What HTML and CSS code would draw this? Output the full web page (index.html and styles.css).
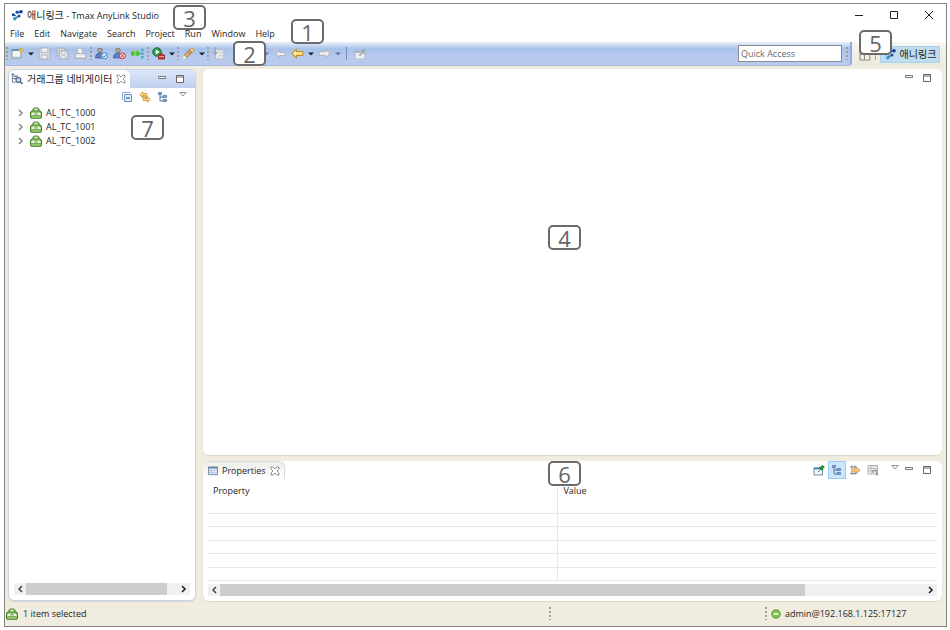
FILE: index.html
```html
<!DOCTYPE html>
<html lang="ko">
<head>
  <meta charset="UTF-8" />
  <meta name="viewport" content="width=device-width, initial-scale=1.0" />
  <title>애니링크 - Tmax AnyLink Studio</title>
  <link rel="stylesheet" href="styles.css">
</head>
<body>

  <!-- shared icons -->
  <svg class="sprite" aria-hidden="true">
    <symbol id="logo" viewBox="0 0 12 12">
      <path d="M6 3.500H10M2.500 5.500L5 7M4 9.500L7.500 7" fill="none" stroke="#2460a8" stroke-width="1.200"/>
      <circle cx="2.300" cy="5.800" r="1.500" fill="#16458c"/><circle cx="3.800" cy="9.800" r="1.800" fill="#2e9ad0"/>
      <circle cx="6.200" cy="3.300" r="1.700" fill="#1c55b0"/><circle cx="10" cy="2.800" r="1.800" fill="#123f93"/>
      <circle cx="8" cy="7" r="1.500" fill="#1c4f9c"/>
    </symbol>
    <symbol id="caret" viewBox="0 0 6 4"><path d="M0 0.5h6L3 3.5z" fill="currentColor"/></symbol>
    <symbol id="case" viewBox="0 0 12 12">
      <path d="M3 4V2.500L4.500 1H7.500L9 2.500V4" fill="#d7e9c3" stroke="#4b8a2b" stroke-width="1.200"/>
      <path d="M2 4H10L11.400 5.500V10L10.500 11.300H1.500L.6 10V5.500z" fill="#a5d07d" stroke="#3f7d22" stroke-width="1.100"/>
      <path d="M1.500 6.200h9v1.800h-9z" fill="#f3faea"/><path d="M1.500 8.700h9" stroke="#5c983b" stroke-width=".8"/>
      <path d="M5 6h2v2.200H5z" fill="#fff" stroke="#4b8a2b" stroke-width=".6"/>
    </symbol>
    <symbol id="close" viewBox="0 0 10 10">
      <path d="M1 1h2l2 2 2-2h2v2L7 5l2 2v2H7L5 7 3 9H1V7l2-2-2-2z" fill="#fff" stroke="#777" stroke-width=".8"/>
    </symbol>
    <symbol id="min" viewBox="0 0 8 4"><path d="M.5 .5h7v2h-7z" fill="#fff" stroke="#74777c"/></symbol>
    <symbol id="max" viewBox="0 0 8 8"><path d="M.5 .5h7v7h-7z" fill="#fff" stroke="#666"/><path d="M0 2h8" stroke="#666"/></symbol>
    <symbol id="menu" viewBox="0 0 8 5"><path d="M.8 .5h6.4L4 4z" fill="#fff" stroke="#777" stroke-width=".8"/></symbol>
    <symbol id="tree" viewBox="0 0 12 12">
      <path d="M3 3v7h3M3 6h3" fill="none" stroke="#56779f"/>
      <path d="M1.5 1.5h3v2h-3zM6 4.5h3.5v2H6zM6 8.5h3.5v2H6z" fill="#8aa9d2" stroke="#4f76ac" stroke-width=".8"/>
    </symbol>
    <symbol id="navi" viewBox="0 0 13 13">
      <path d="M1.500 1v9H5M1.500 6H5" fill="none" stroke="#69798e"/>
      <path d="M.5 1.500h3M3 3.500h4.500M3 6h3" stroke="#6f86a8" stroke-width="1.800"/>
      <circle cx="8" cy="7.500" r="2.600" fill="#c9ddf2" stroke="#46587a" stroke-width="1.200"/><path d="M10 9.500l2.500 2.500" stroke="#555d70" stroke-width="1.600"/>
    </symbol>
    <symbol id="new" viewBox="0 0 13 12">
      <path d="M1 2.500h9v8H1z" fill="#eff8fb" stroke="#a3935a"/><path d="M1 2.500h8" stroke="#4c8dba" stroke-width="1.6"/>
      <path d="M2 9.500h6" stroke="#a6d5e4"/><path d="M10 .5v5M7.500 3h5" stroke="#e2ad26" stroke-width="1.600"/><path d="M9.500 2.500h1v1h-1z" fill="#fff6bb"/>
    </symbol>
    <symbol id="save" viewBox="0 0 12 12">
      <path d="M1 1h10v10H1z" fill="#d5dae4" stroke="#b0b4bd"/><path d="M3 1h6v4H3zM3.5 7.5h5V11h-5z" fill="#eef0f4" stroke="#b0b4bd" stroke-width=".8"/>
    </symbol>
    <symbol id="saveall" viewBox="0 0 12 12">
      <path d="M1 1h7v7H1z" fill="#d5dae4" stroke="#b0b4bd"/><path d="M3 3.5h8V11H4.500L3 9.500z" fill="#e4e8ef" stroke="#a8adb8"/>
      <path d="M5 4h4v2.500H5zM5.500 8h3v3h-3z" fill="#f5f6f8" stroke="#adb2bc" stroke-width=".7"/>
    </symbol>
    <symbol id="print" viewBox="0 0 12 12">
      <path d="M3 1h4l1.500 5h-5z" fill="#f2f3f6" stroke="#b4b8c0"/><path d="M1 6h10v4.500H1z" fill="#e3e5ea" stroke="#acb0b9"/><path d="M2 8.500h8" stroke="#f4f5f8"/>
    </symbol>
    <symbol id="user" viewBox="0 0 13 12">
      <circle cx="5" cy="2.800" r="2.200" fill="#c2ab90" stroke="#6d6468" stroke-width=".8"/>
      <path d="M.5 10.500Q.5 5.500 5 5.500T9 10.500z" fill="#5b7fc0" stroke="#46609a" stroke-width=".8"/>
    </symbol>
    <symbol id="link" viewBox="0 0 14 12">
      <path d="M0 3.500h4v5H0zM5 3.500h4v5H5z" fill="#49bf3c" stroke="#7bdc52" stroke-width=".6"/>
      <path d="M9 6h2" fill="none" stroke="#4383a7"/><path d="M11 .8h2.500v2.500H11zM11 4.800h2.500v2.500H11zM11 8.800h2.500v2.500H11z" fill="#41a6c8"/>
    </symbol>
    <symbol id="run" viewBox="0 0 13 13">
      <circle cx="5" cy="5" r="4.300" fill="#2f9b45" stroke="#20773a"/><path d="M3.700 2.500L7.700 5l-4 2.500z" fill="#fff"/>
      <path d="M8 8V7h3v1" fill="none" stroke="#942428"/><path d="M6.500 8h6v4h-6z" fill="#cc4141" stroke="#962b2d"/><path d="M7 9.500h5" stroke="#eca09b"/>
    </symbol>
    <symbol id="torch" viewBox="0 0 13 13">
      <path d="M7.500 2.500L10 .8l2.200 2.400-2 2.500z" fill="#f6d473" stroke="#b9935a"/><path d="M7 3L2 8.500l2.500 2.300L10 5.500z" fill="#e6a967" stroke="#9e7650" stroke-width=".8"/>
      <path d="M6 4.500l2.500 2.200" stroke="#7b716c"/><path d="M2 8.500l2.500 2.300L1 12z" fill="#fffbd9"/>
    </symbol>
    <symbol id="import" viewBox="0 0 12 12">
      <path d="M3 2.500h8V11H3z" fill="#e7e9ed" stroke="#b6bac2"/><path d="M3 0v6.500M1 4.500l2 2.500 2-2.500" fill="none" stroke="#a3a7b0" stroke-width="1.300"/><path d="M6 5h4M6 8h4" stroke="#c3c8d1"/>
    </symbol>
    <symbol id="back" viewBox="0 0 12 10"><path d="M.7 5L5 1v2.300h6v3.400H5V9z"/></symbol>
    <symbol id="forward" viewBox="0 0 12 10"><path d="M11.300 5L7 1v2.300H1v3.400h6V9z"/></symbol>
    <symbol id="backedit" viewBox="0 0 13 11">
      <path d="M3 5.500L6.500 2.500v2H12v3H6.500v2z" fill="#eceef1" stroke="#b4b8bf"/><path d="M2.500.5v4M.5 2.500h4M1 1l3 3M4 1L1 4" stroke="#c5c8c9" stroke-width=".7"/>
    </symbol>
    <symbol id="pin-gray" viewBox="0 0 12 12">
      <path d="M1 4.500h9V11H1z" fill="#edf0f2" stroke="#b9bec6"/><path d="M1 4.500h5" stroke="#a5b0b6" stroke-width="1.500"/><path d="M5 8l3-3M7 3l3 3M8 4l2-2" stroke="#98a99d" stroke-width="1.500"/>
    </symbol>
    <symbol id="pin" viewBox="0 0 12 12">
      <path d="M1 4h8.500v7H1z" fill="#edf7fa" stroke="#6a93a9"/><path d="M1 4.500h6" stroke="#3c7eac" stroke-width="1.600"/>
      <path d="M5 8l3-3" stroke="#5b7965"/><path d="M6.500 3L10 6.200M8 4.500l2-2M8.500 1.500l2.700 2.300" stroke="#288633" stroke-width="1.800"/>
    </symbol>
    <symbol id="collapse" viewBox="0 0 12 12">
      <path d="M1.500 9V1.500h8" fill="none" stroke="#8cabd2"/><path d="M3.500 3.500h7v7h-7z" fill="#dff0fa" stroke="#6a90bd"/><path d="M5 7h4" stroke="#285c94" stroke-width="1.200"/>
    </symbol>
    <symbol id="sync" viewBox="0 0 13 13">
      <path d="M.8 4L4 .8v2h4.500v5H6.500V5H4v2z" fill="#fbdf91" stroke="#c48b28" stroke-width=".9"/>
      <path d="M12.200 9L9 12.200v-2H4.500v-5H6.500V8H9V6z" fill="#fbdf91" stroke="#c48b28" stroke-width=".9"/>
    </symbol>
    <symbol id="filter" viewBox="0 0 14 13">
      <path d="M1 3h8M1 10.500h8M3.500 1v4M7 1v4M3.500 8.500V12M7 8.500V12" stroke="#6f7481" stroke-width="1"/>
      <path d="M3 5.500h6v-2L13 6.700 9 10V8H3z" fill="#ffd889" stroke="#c98a28" stroke-width=".9"/>
    </symbol>
    <symbol id="restore" viewBox="0 0 12 12">
      <path d="M1 1.500h9.500v8.500H1z" fill="#f4f4f4" stroke="#b4b4b4"/><path d="M1 2h9.500M1 4.500h9M1 7h6M4 2v8" stroke="#b8b8b8"/>
      <path d="M6 9V6.500h3.500V10l1.500 1.500" fill="none" stroke="#9c9c9c" stroke-width="1.400"/>
    </symbol>
    <symbol id="table" viewBox="0 0 11 10">
      <path d="M.5 .5h10v8.500H.5z" fill="#e4edf9" stroke="#71839f"/><path d="M.5 1.500h10" stroke="#5d7aa8" stroke-width="1.500"/><path d="M3.500 2v7M1 4.500h9.500M1 6.800h9.500" stroke="#a7b9d5" stroke-width=".8"/>
    </symbol>
    <symbol id="persp" viewBox="0 0 12 12">
      <path d="M1 3h9v8H1zM1 6h9M5 3v8" fill="#f7f5e9" stroke="#8d8b7c"/><path d="M9 0v5M6.500 2.500h5" stroke="#d6a42c"/>
    </symbol>
    <symbol id="chev-left" viewBox="0 0 6 8"><path d="M5 1L2 4l3 3" fill="none" stroke="#444" stroke-width="1.500"/></symbol>
    <symbol id="chev-right" viewBox="0 0 6 8"><path d="M1 1l3 3-3 3" fill="none" stroke="currentColor" stroke-width="1.500"/></symbol>
  </svg>

  <div class="window">
    <header class="titlebar">
      <svg class="icon"><use href="#logo"/></svg>
      <h1><span class="ko">애니링크</span> - Tmax AnyLink Studio</h1>
      <div class="window-buttons">
        <button aria-label="Minimize"><svg viewBox="0 0 10 10"><path d="M1 5.500h8"/></svg></button>
        <button aria-label="Maximize"><svg viewBox="0 0 10 10"><path d="M1.500 1.500h7v7h-7z"/></svg></button>
        <button aria-label="Close"><svg viewBox="0 0 10 10"><path d="M1 1l8 8M9 1L1 9"/></svg></button>
      </div>
    </header>

    <nav class="menubar">
      <button>File</button>
      <button>Edit</button>
      <button>Navigate</button>
      <button>Search</button>
      <button>Project</button>
      <button>Run</button>
      <button>Window</button>
      <button>Help</button>
    </nav>

    <div class="toolbar">
      <div class="tools">
        <i class="grip"></i>
        <button class="tool" aria-label="New"><svg><use href="#new"/></svg></button>
        <button class="drop" aria-label="New menu"><svg><use href="#caret"/></svg></button>
        <button class="tool" aria-label="Save"><svg><use href="#save"/></svg></button>
        <button class="tool" aria-label="Save all"><svg><use href="#saveall"/></svg></button>
        <button class="tool" aria-label="Print"><svg><use href="#print"/></svg></button>
        <i class="grip"></i>
        <button class="tool" aria-label="Log in">
          <svg viewBox="0 0 13 12"><use href="#user" width="13" height="12"/><circle cx="9.500" cy="8.300" r="3" fill="#dceffc" stroke="#3f89cf"/><path d="M8 8.300l1.200 1.200 2-2.500" fill="none" stroke="#2974bd"/></svg>
        </button>
        <button class="tool" aria-label="Log out">
          <svg viewBox="0 0 13 12"><use href="#user" width="13" height="12"/><circle cx="9.500" cy="8.300" r="3" fill="#f8dfdc" stroke="#d2332e"/><path d="M8.200 7l2.600 2.600M10.800 7L8.200 9.600" stroke="#cb2929"/></svg>
        </button>
        <button class="tool" aria-label="Deploy"><svg><use href="#link"/></svg></button>
        <i class="grip"></i>
        <button class="tool" aria-label="Run"><svg><use href="#run"/></svg></button>
        <button class="drop" aria-label="Run menu"><svg><use href="#caret"/></svg></button>
        <i class="grip"></i>
        <button class="tool" aria-label="Search"><svg><use href="#torch"/></svg></button>
        <button class="drop" aria-label="Search menu"><svg><use href="#caret"/></svg></button>
        <i class="grip"></i>
        <button class="tool" aria-label="Import"><svg><use href="#import"/></svg></button>
        <span class="marker-slot"><b class="marker marker-2">2</b></span>
        <button class="drop dim" aria-label="Annotation menu"><svg><use href="#caret"/></svg></button>
        <button class="tool" aria-label="Last edit location"><svg><use href="#backedit"/></svg></button>
        <button class="tool back" aria-label="Back"><svg><use href="#back"/></svg></button>
        <button class="drop" aria-label="Back menu"><svg><use href="#caret"/></svg></button>
        <button class="tool forward" aria-label="Forward"><svg><use href="#forward"/></svg></button>
        <button class="drop dim" aria-label="Forward menu"><svg><use href="#caret"/></svg></button>
        <i class="line"></i>
        <button class="tool" aria-label="Pin editor"><svg><use href="#pin-gray"/></svg></button>
        <input class="quick" type="text" placeholder="Quick Access" aria-label="Quick Access">
        <i class="grip"></i>
      </div>
      <div class="perspectives">
        <button class="tool" aria-label="Open perspective"><svg><use href="#persp"/></svg></button>
        <i class="split"></i>
        <button class="persp-active"><svg class="icon"><use href="#logo"/></svg>애니링크</button>
        <b class="marker marker-5">5</b>
      </div>
    </div>

    <main class="workbench">
      <section class="view navigator">
        <div class="tabs">
          <div class="tab">
            <svg class="icon"><use href="#navi"/></svg>
            <h2 class="ko">거래그룹 네비게이터</h2>
            <button aria-label="Close view"><svg class="x"><use href="#close"/></svg></button>
          </div>
          <div class="view-buttons">
            <button aria-label="Minimize view"><svg class="min"><use href="#min"/></svg></button>
            <button aria-label="Maximize view"><svg class="max"><use href="#max"/></svg></button>
          </div>
        </div>
        <div class="view-tools">
          <button aria-label="Collapse all"><svg class="icon"><use href="#collapse"/></svg></button>
          <button aria-label="Link with editor"><svg class="icon"><use href="#sync"/></svg></button>
          <button aria-label="Tree layout"><svg class="icon"><use href="#tree"/></svg></button>
          <button class="view-menu" aria-label="View menu"><svg class="menu"><use href="#menu"/></svg></button>
        </div>
        <ul class="tree">
          <li><button aria-label="Expand"><svg><use href="#chev-right"/></svg></button><svg class="icon"><use href="#case"/></svg>AL_TC_1000</li>
          <li><button aria-label="Expand"><svg><use href="#chev-right"/></svg></button><svg class="icon"><use href="#case"/></svg>AL_TC_1001</li>
          <li><button aria-label="Expand"><svg><use href="#chev-right"/></svg></button><svg class="icon"><use href="#case"/></svg>AL_TC_1002</li>
        </ul>
        <div class="scrollbar">
          <button aria-label="Scroll left"><svg><use href="#chev-left"/></svg></button>
          <div class="track"><div class="thumb"></div></div>
          <button aria-label="Scroll right"><svg><use href="#chev-right"/></svg></button>
        </div>
        <b class="marker marker-7">7</b>
      </section>

      <section class="view editor">
        <div class="view-buttons">
          <button aria-label="Minimize editor"><svg class="min"><use href="#min"/></svg></button>
          <button aria-label="Maximize editor"><svg class="max"><use href="#max"/></svg></button>
        </div>
        <b class="marker marker-4">4</b>
      </section>

      <section class="view properties">
        <div class="tabs">
          <div class="tab">
            <svg class="table-icon"><use href="#table"/></svg>
            <h2>Properties</h2>
            <button aria-label="Close view"><svg class="x"><use href="#close"/></svg></button>
          </div>
          <div class="prop-tools">
            <button aria-label="Pin to selection"><svg class="icon"><use href="#pin"/></svg></button>
            <button class="on" aria-label="Show categories"><svg class="icon"><use href="#tree"/></svg></button>
            <button aria-label="Show advanced properties"><svg class="icon"><use href="#filter"/></svg></button>
            <button aria-label="Restore default value"><svg class="icon"><use href="#restore"/></svg></button>
          </div>
          <button class="view-menu" aria-label="View menu"><svg class="menu"><use href="#menu"/></svg></button>
          <div class="view-buttons">
            <button aria-label="Minimize view"><svg class="min"><use href="#min"/></svg></button>
            <button aria-label="Maximize view"><svg class="max"><use href="#max"/></svg></button>
          </div>
        </div>
        <div class="table-wrap">
          <table>
            <thead>
              <tr><th>Property</th><th>Value</th></tr>
            </thead>
            <tbody>
              <tr><td></td><td></td></tr>
              <tr><td></td><td></td></tr>
              <tr><td></td><td></td></tr>
              <tr><td></td><td></td></tr>
              <tr><td></td><td></td></tr>
              <tr><td></td><td></td></tr>
            </tbody>
          </table>
        </div>
        <div class="scrollbar">
          <button aria-label="Scroll left"><svg><use href="#chev-left"/></svg></button>
          <div class="track"><div class="thumb"></div></div>
          <button aria-label="Scroll right"><svg><use href="#chev-right"/></svg></button>
        </div>
        <b class="marker marker-6">6</b>
      </section>
    </main>

    <footer class="statusbar">
      <div class="status-left"><svg class="icon"><use href="#case"/></svg>1 item selected</div>
      <div class="status-mid"><i class="grip"></i></div>
      <div class="status-right">
        <i class="grip"></i>
        <svg class="dot" viewBox="0 0 10 10"><circle cx="5" cy="5" r="4.200" fill="#7fc94b" stroke="#54962f"/><path d="M2.500 5h5" stroke="#f2ffe4" stroke-width="1.600"/></svg>
        admin@192.168.1.125:17127
      </div>
    </footer>

    <b class="marker marker-3">3</b>
    <b class="marker marker-1">1</b>
  </div>

</body>
</html>
```
FILE: styles.css
```css
* {
  margin: 0;
  padding: 0;
  box-sizing: border-box;
}

body {
  height: 100vh;
  padding: 3px 3px 3px 4px;
  background: #fff;
  color: #1e1e1e;
  font: 9px/14px "Open Sans", "Noto Sans CJK KR", sans-serif;
}

button {
  display: flex;
  align-items: center;
  justify-content: center;
  border: none;
  background: none;
  color: inherit;
  font: inherit;
}

h1,
h2 {
  font-size: 9px;
  font-weight: 400;
  white-space: nowrap;
}

.ko {
  font-size: 10px;
}

.sprite {
  position: absolute;
  width: 0;
  height: 0;
}

.icon {
  width: 12px;
  height: 12px;
  flex: none;
}

.window {
  position: relative;
  display: flex;
  flex-direction: column;
  height: 100%;
  border: 1px solid #85837d;
  background: #f0ece0;
}

/* title and menu */
.titlebar {
  display: flex;
  align-items: center;
  gap: 4px;
  height: 22px;
  padding-left: 6px;
  background: #fff;
}

.window-buttons {
  display: flex;
  margin-left: auto;
}

.window-buttons button {
  width: 35px;
  height: 20px;
}

.window-buttons svg {
  width: 10px;
  height: 10px;
  fill: none;
  stroke: #222;
}

.menubar {
  display: flex;
  height: 16px;
  background: #fff;
}

.menubar button {
  padding: 0 5px;
}

/* toolbar */
.toolbar {
  display: flex;
  height: 24px;
  background: linear-gradient(#f7f6f2, #ece8dc);
}

.tools {
  display: flex;
  flex: 1;
  align-items: center;
  padding: 0 2px 0 0;
  border-right: 2px solid #8eaae0;
  border-bottom: 1px solid #a8b9dd;
  border-radius: 0 0 4px 0;
  background: linear-gradient(#eaf0fa 0, #a5c2ea 30%, #b7c9ee 60%, #b9caef);
}

.grip {
  width: 3px;
  height: 13px;
  flex: none;
  background: repeating-linear-gradient(#a39e91 0 2px, transparent 2px 4px) 1px 0 / 2px 100% no-repeat;
}

.tool {
  width: 18px;
  height: 18px;
  flex: none;
}

.tool svg {
  width: 13px;
  height: 13px;
}

.drop {
  width: 9px;
  height: 18px;
  flex: none;
}

.drop svg {
  width: 6px;
  height: 4px;
}

.dim {
  color: #69748a;
}

.back {
  fill: #ffe9a4;
  stroke: #c69329;
}

.forward {
  fill: #eceef1;
  stroke: #b4b8bf;
}

.line {
  width: 1px;
  height: 13px;
  margin: 0 4px;
  background: #788cb6;
}

.marker-slot {
  position: relative;
  width: 34px;
  height: 18px;
}

.quick {
  width: 104px;
  height: 17px;
  margin-left: auto;
  margin-right: 3px;
  padding: 0 2px;
  border: 1px solid #888b93;
  background: #fff;
  font: inherit;
}

.quick::placeholder {
  color: #6b6b6b;
}

.perspectives {
  position: relative;
  display: flex;
  align-items: center;
  padding: 0 6px 0 4px;
}

.split {
  width: 1px;
  height: 12px;
  margin: 0 4px 0 1px;
  background: #a8a497;
}

.persp-active {
  width: 60px;
  height: 17px;
  gap: 4px;
  border: 1px solid #a9d2ee;
  background: #c0ddf0;
  font-size: 10px;
}

/* views */
.workbench {
  display: grid;
  flex: 1;
  grid-template: minmax(0, 1fr) 140px / 188px minmax(0, 1fr);
  gap: 6px 7px;
  min-height: 0;
  padding: 3px 4px 0 3px;
}

.view {
  position: relative;
  display: flex;
  flex-direction: column;
  border-radius: 6px;
  background: #fff;
  box-shadow: 0 1px 1px #dcd8c9;
}

.navigator {
  grid-row: span 2;
  border: 1px solid #c4d3ee;
}

.tabs {
  display: flex;
  height: 18px;
}

.tab {
  display: flex;
  align-items: center;
  gap: 4px;
  border-radius: 6px 6px 0 0;
}

.navigator .tabs {
  border-radius: 6px 6px 0 0;
  background: linear-gradient(#dbe6f8, #bfd0ef);
}

.navigator .tab {
  padding: 0 4px 0 2px;
  background: #fff;
}

.x {
  width: 10px;
  height: 10px;
}

.min {
  width: 8px;
  height: 4px;
}

.max {
  width: 8px;
  height: 8px;
}

.menu {
  width: 8px;
  height: 5px;
}

.view-buttons {
  display: flex;
  margin-left: auto;
  padding-right: 6px;
}

.view-buttons button {
  width: 18px;
  height: 18px;
}

.view-buttons .min {
  margin-bottom: 3px;
}

.view-tools {
  display: flex;
  justify-content: flex-end;
  padding-right: 1px;
}

.view-tools button {
  width: 18px;
  height: 18px;
}

.view-tools .view-menu {
  width: 22px;
  padding-bottom: 6px;
}

.tree {
  flex: 1;
  list-style: none;
  padding-left: 7px;
}

.tree li {
  display: flex;
  align-items: center;
  gap: 4px;
  height: 14px;
}

.tree button {
  width: 10px;
  height: 12px;
  color: #888;
}

.tree button svg {
  width: 6px;
  height: 8px;
}

.scrollbar {
  display: flex;
  height: 12px;
  margin: 0 5px 5px;
  background: #f0f0f0;
}

.scrollbar button {
  width: 12px;
  height: 12px;
}

.scrollbar button svg {
  width: 6px;
  height: 8px;
}

.track {
  flex: 1;
}

.thumb {
  width: 83%;
  height: 12px;
  background: #cdcdcd;
}

.navigator .thumb {
  width: 93%;
}

/* properties */
.properties .tab {
  padding: 0 4px 0 5px;
  border: 1px solid #d9d9d6;
  border-width: 1px 1px 0 0;
  background: linear-gradient(#edede9, #fff);
}

.table-icon {
  width: 10px;
  height: 10px;
}

.prop-tools {
  display: flex;
  margin-left: auto;
}

.prop-tools button {
  width: 18px;
  height: 18px;
}

.prop-tools .on {
  border: 1px solid #99ccf5;
  background: #cce6fc;
}

.properties .view-menu {
  width: 18px;
  padding: 0 0 6px 7px;
}

.properties .view-buttons {
  margin-left: 0;
}

.table-wrap {
  flex: 1;
  min-height: 0;
  margin: 4px 5px 0;
  overflow: hidden;
}

table {
  width: 100%;
  border-collapse: collapse;
  table-layout: fixed;
}

th {
  height: 16px;
  padding: 0 5px;
  font-weight: 400;
  text-align: left;
}

th:first-child,
td:first-child {
  width: 48%;
  border-right: 1px solid #e8e8e8;
}

td {
  height: 14px;
  border-bottom: 1px solid #e8e8e8;
}

tr:nth-child(even) td {
  height: 13px;
}

/* status bar */
.statusbar {
  display: flex;
  align-items: center;
  height: 25px;
}

.statusbar > div {
  display: flex;
  align-items: center;
}

.status-left {
  flex: 1;
  gap: 5px;
  padding-left: 1px;
}

.status-mid {
  width: 216px;
}

.status-right {
  width: 182px;
  gap: 4px;
}

.dot {
  width: 10px;
  height: 10px;
}

/* numbered callouts */
.marker {
  position: absolute;
  z-index: 2;
  width: 33px;
  height: 25px;
  border: 2px solid #6d6a6b;
  border-radius: 5px;
  background: #fff;
  color: #666;
  font-size: 22px;
  font-weight: 400;
  line-height: 22px;
  text-align: center;
}

.marker-1 {
  top: 15px;
  left: 286px;
}

.marker-2 {
  top: -4px;
  left: 6px;
}

.marker-3 {
  top: 1px;
  left: 168px;
}

.marker-4 {
  top: 156px;
  left: 345px;
}

.marker-5 {
  top: -12px;
  left: 7px;
}

.marker-6 {
  top: 0;
  left: 345px;
}

.marker-7 {
  top: 45px;
  left: 122px;
}
```
